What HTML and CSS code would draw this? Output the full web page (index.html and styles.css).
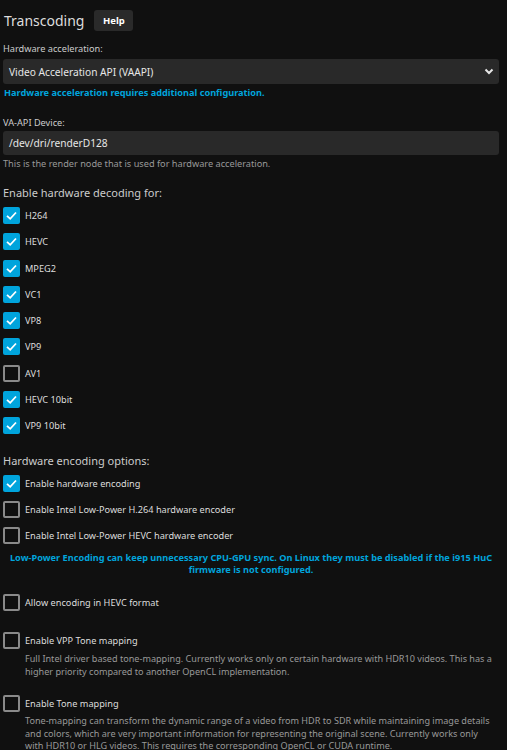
FILE: index.html
```html
<!DOCTYPE html>
<html lang="en">
<head>
    <meta charset="UTF-8">
    <meta name="viewport" content="width=device-width, initial-scale=1.0">
    <title>Transcoding</title>
    <link rel="stylesheet" href="styles.css">
</head>
<body>
    <div class="header">
        <h1>Transcoding</h1>
        <button class="btn-help">Help</button>
    </div>

    <label class="field-label">Hardware acceleration:</label>
    <div class="select">
        <span>Video Acceleration API (VAAPI)</span>
        <svg class="chevron" width="10" height="7" viewBox="0 0 10 7"><path d="M1.5 1.5 L5 5 L8.5 1.5" fill="none" stroke="#e6e6e6" stroke-width="2"/></svg>
    </div>
    <div class="note-link">Hardware acceleration requires additional configuration.</div>

    <label class="field-label label-device">VA-API Device:</label>
    <div class="input">/dev/dri/renderD128</div>
    <div class="field-desc">This is the render node that is used for hardware acceleration.</div>

    <h2 class="section">Enable hardware decoding for:</h2>
    <div class="checks">
        <div class="check-row"><span class="box on"></span>H264</div>
        <div class="check-row"><span class="box on"></span>HEVC</div>
        <div class="check-row"><span class="box on"></span>MPEG2</div>
        <div class="check-row"><span class="box on"></span>VC1</div>
        <div class="check-row"><span class="box on"></span>VP8</div>
        <div class="check-row"><span class="box on"></span>VP9</div>
        <div class="check-row"><span class="box"></span>AV1</div>
        <div class="check-row"><span class="box on"></span>HEVC 10bit</div>
        <div class="check-row"><span class="box on"></span>VP9 10bit</div>
    </div>

    <h2 class="section section-enc">Hardware encoding options:</h2>
    <div class="checks checks-enc">
        <div class="check-row"><span class="box on"></span>Enable hardware encoding</div>
        <div class="check-row"><span class="box"></span>Enable Intel Low-Power H.264 hardware encoder</div>
        <div class="check-row"><span class="box"></span>Enable Intel Low-Power HEVC hardware encoder</div>
    </div>
    <div class="note-center">Low-Power Encoding can keep unnecessary CPU-GPU sync. On Linux they must be disabled if the i915 HuC firmware is not configured.</div>

    <div class="check-row row-hevc"><span class="box"></span>Allow encoding in HEVC format</div>

    <div class="check-row row-vpp"><span class="box"></span>Enable VPP Tone mapping</div>
    <div class="check-desc desc-vpp">Full Intel driver based tone-mapping. Currently works only on certain hardware with HDR10 videos. This has a higher priority compared to another OpenCL implementation.</div>

    <div class="check-row row-tone"><span class="box"></span>Enable Tone mapping</div>
    <div class="check-desc desc-tone">Tone-mapping can transform the dynamic range of a video from HDR to SDR while maintaining image details and colors, which are very important information for representing the original scene. Currently works only with HDR10 or HLG videos. This requires the corresponding OpenCL or CUDA runtime.</div>
</body>
</html>
```

FILE: styles.css
```css
body {
    background-color: #101010;
    color: #ddd;
    font-family: 'Noto Sans', sans-serif;
    margin: 0;
    padding: 0 8px 0 3px;
    overflow: hidden;
}

.header {
    display: flex;
    align-items: center;
    height: 21px;
    margin-top: 10px;
}

.header h1 {
    margin: 0 10px 0 1px;
    font-size: 14px;
    font-weight: 400;
    line-height: 21px;
    color: #ddd;
}

.btn-help {
    background-color: #2a2a2a;
    color: #fff;
    border: 0;
    border-radius: 3px;
    font-family: inherit;
    font-size: 9.5px;
    font-weight: 700;
    width: 39px;
    height: 21px;
    padding: 0;
}

.field-label {
    display: block;
    margin-top: 11px;
    font-size: 9.2px;
    line-height: 14px;
    color: #ccc;
}

.select, .input {
    background-color: #292929;
    border-radius: 3px;
    color: #e6e6e6;
    font-size: 10.2px;
    display: flex;
    align-items: center;
    padding: 0 5px 0 6px;
}

.select {
    margin-top: 3px;
    height: 25px;
    justify-content: space-between;
}

.note-link {
    margin-top: 2px;
    font-size: 9.2px;
    line-height: 14px;
    font-weight: 700;
    color: #00a4dc;
    padding-left: 1px;
}

.label-device {
    margin-top: 16px;
}

.input {
    margin-top: 1px;
    height: 24px;
}

.field-desc {
    margin-top: 2px;
    font-size: 9.2px;
    line-height: 14px;
    color: #999;
}

.section {
    margin: 13px 0 0 0;
    font-size: 11px;
    font-weight: 400;
    line-height: 18px;
    color: #ccc;
}

.checks {
    display: flex;
    flex-direction: column;
    gap: 9.25px;
    margin-top: 5px;
}

.check-row {
    display: flex;
    align-items: center;
    height: 17px;
    font-size: 9.2px;
    color: #ddd;
}

.box {
    width: 17px;
    height: 17px;
    box-sizing: border-box;
    border: 2px solid #8a8a8a;
    border-radius: 2px;
    margin-right: 5px;
    flex-shrink: 0;
}

.box.on {
    border: 0;
    background: #00a4dc url("data:image/svg+xml,%3Csvg xmlns='http://www.w3.org/2000/svg' viewBox='0 0 17 17'%3E%3Cpath d='M4 8.8 L7.2 11.8 L13 5.5' fill='none' stroke='white' stroke-width='1.8'/%3E%3C/svg%3E") center / 17px 17px no-repeat;
}

.section-enc {
    margin-top: 18px;
}

.checks-enc {
    gap: 9px;
}

.note-center {
    margin-top: 8px;
    font-size: 9.2px;
    line-height: 12px;
    font-weight: 700;
    color: #00a4dc;
    text-align: center;
}

.row-hevc {
    margin-top: 18px;
}

.row-vpp {
    margin-top: 21px;
}

.check-desc {
    padding-left: 22px;
    font-size: 9.1px;
    line-height: 13px;
    color: #999;
}

.desc-vpp {
    margin-top: 3px;
}

.row-tone {
    margin-top: 17px;
}

.desc-tone {
    margin-top: 3px;
    padding-right: 6px;
    line-height: 12.6px;
}
```
